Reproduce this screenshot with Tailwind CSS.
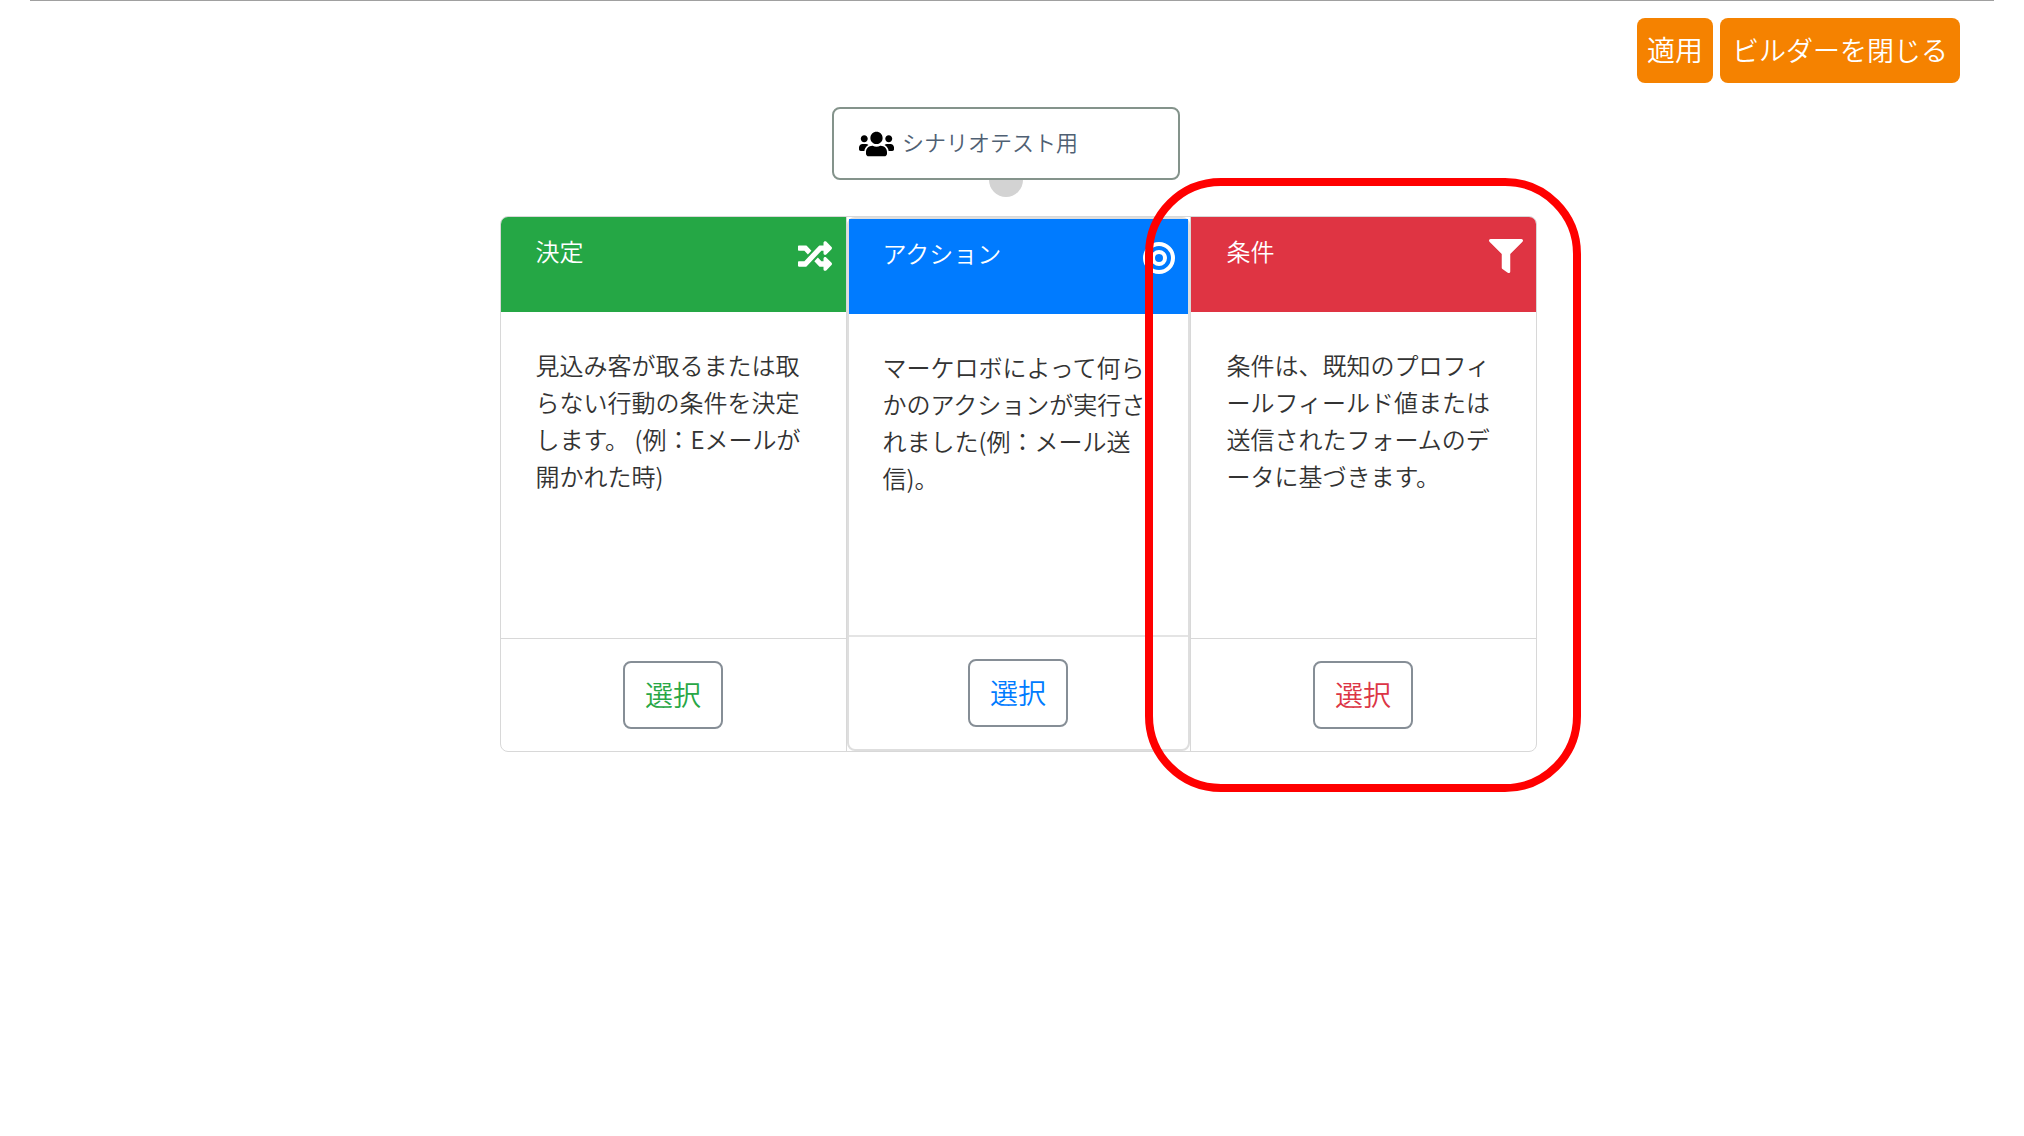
<!DOCTYPE html>
<html lang="ja">
  <head>
    <meta charset="UTF-8" />
    <meta name="viewport" content="width=device-width, initial-scale=1.0" />
    <title>シナリオビルダー</title>
    <script src="https://cdn.jsdelivr.net/npm/@tailwindcss/browser@4"></script>
  </head>
  <body class="min-h-screen bg-white font-['Noto_Sans_CJK_JP',sans-serif] text-2xl font-[350] leading-[37px] text-[#333]">
    <div class="mx-[30px] min-h-screen border-t border-[#a0a0a0]">
      <!-- Toolbar -->
      <header class="flex justify-end gap-[7px] pt-[17px] pr-[34px]">
        <button type="button" class="h-[65px] rounded-lg bg-[#f58200] px-2.5 pb-0.5 text-[28px] text-white cursor-pointer">適用</button>
        <button type="button" class="h-[65px] rounded-lg bg-[#f58200] px-3 pb-0.5 text-[27px] text-white cursor-pointer">ビルダーを閉じる</button>
      </header>

      <main class="flex flex-col items-center pt-6 pl-3">
        <!-- Source node -->
        <div class="flex flex-col items-center pr-6">
          <div class="flex h-[73px] w-[348px] items-center gap-2 rounded-lg border-2 border-[#84938b] pr-6 pl-[25px]">
            <svg class="h-7 w-[35px] shrink-0" viewBox="0 0 640 512" fill="#000">
              <path d="M96 224c35.3 0 64-28.7 64-64s-28.7-64-64-64-64 28.7-64 64 28.7 64 64 64zm448 0c35.3 0 64-28.7 64-64s-28.7-64-64-64-64 28.7-64 64 28.7 64 64 64zm32 32h-64c-17.6 0-33.5 7.1-45.1 18.6 40.3 22.1 68.9 62 75.1 109.4h66c17.7 0 32-14.3 32-32v-32c0-35.3-28.7-64-64-64zm-256 0c61.9 0 112-50.1 112-112S381.9 32 320 32 208 82.1 208 144s50.1 112 112 112zm76.8 32h-8.3c-20.8 10-43.9 16-68.5 16s-47.6-6-68.5-16h-8.3C179.6 288 128 339.6 128 403.2V432c0 26.5 21.5 48 48 48h288c26.5 0 48-21.5 48-48v-28.8c0-63.6-51.6-115.2-115.2-115.2zm-223.7-13.4C161.5 263.1 145.6 256 128 256H64c-35.3 0-64 28.7-64 64v32c0 17.7 14.3 32 32 32h65.9c6.3-47.4 34.9-87.3 75.2-109.4z" />
            </svg>
            <span class="pb-1 text-[22px] text-[#4f6073]">シナリオテスト用</span>
          </div>
          <div class="h-[17px] w-[34px] rounded-b-full bg-[#d3d3d3]"></div>
        </div>

        <!-- Event type cards -->
        <div class="relative mt-[19px]">
          <div class="flex overflow-hidden rounded-lg border border-[#d8d8d8] whitespace-nowrap">
            <section class="flex w-[346px] flex-col border-r border-[#d8d8d8]">
              <div class="flex h-[95px] items-start justify-between bg-[#25a745] pt-[15px] pr-3.5 pl-[35px] text-white">
                <h2>決定</h2>
                <svg class="mt-[7px] size-[34px]" viewBox="0 0 512 512" fill="currentColor">
                  <path d="M504.971 359.029c9.373 9.373 9.373 24.569 0 33.941l-80 79.984c-15.01 15.01-40.971 4.49-40.971-16.971V416h-58.785a12.004 12.004 0 0 1-8.773-3.812l-70.556-75.596 53.333-57.143L352 336h32v-39.981c0-21.438 25.943-31.998 40.971-16.971l80 79.981zM12 176h84l52.781 56.551 53.333-57.143-70.556-75.596A11.999 11.999 0 0 0 122.785 96H12c-6.627 0-12 5.373-12 12v56c0 6.627 5.373 12 12 12zm372 0v39.984c0 21.46 25.961 31.98 40.971 16.971l80-79.984c9.373-9.373 9.373-24.569 0-33.941l-80-79.981C409.943 24.021 384 34.582 384 56.019V96h-58.785a12.004 12.004 0 0 0-8.773 3.812L96 336H12c-6.627 0-12 5.373-12 12v56c0 6.627 5.373 12 12 12h110.785c3.326 0 6.503-1.381 8.773-3.812L352 176h32z" />
                </svg>
              </div>
              <p class="min-h-[326px] flex-1 px-[35px] py-[34px]">
                見込み客が取るまたは取<br />らない行動の条件を決定<br />します。 (例：Eメールが<br />開かれた時)
              </p>
              <div class="flex h-[113px] items-center justify-center border-t border-[#d8d8d8]">
                <button type="button" class="h-[68px] w-[100px] rounded-lg border-2 border-[#868e96] pb-0.5 text-[28px] text-[#28a745] cursor-pointer">選択</button>
              </div>
            </section>

            <section class="flex w-[343px] flex-col rounded-lg border-2 border-[#dedede]">
              <div class="flex h-[95px] items-start justify-between bg-[#007bff] pt-[15px] pr-[13px] pl-[34px] text-white">
                <h2>アクション</h2>
                <svg class="mt-[7px] size-[34px]" viewBox="0 0 34 34" fill="none" stroke="currentColor" stroke-width="4">
                  <circle cx="18" cy="17" r="14" />
                  <circle cx="18" cy="17" r="6" />
                </svg>
              </div>
              <p class="flex-1 px-[34px] py-[34px]">
                マーケロボによって何ら<br />かのアクションが実行さ<br />れました(例：メール送<br />信)。
              </p>
              <div class="flex h-[114px] items-center justify-center border-t-2 border-[#e4e4e4]">
                <button type="button" class="h-[68px] w-[100px] rounded-lg border-2 border-[#868e96] pb-0.5 text-[28px] text-[#007bff] cursor-pointer">選択</button>
              </div>
            </section>

            <section class="flex w-[346px] flex-col border-l border-[#d8d8d8]">
              <div class="flex h-[95px] items-start justify-between bg-[#df3443] pt-[15px] pr-[13px] pl-9 text-white">
                <h2>条件</h2>
                <svg class="mt-[7px] size-[34px]" viewBox="0 0 512 512" fill="currentColor">
                  <path d="M487.976 0H24.028C2.71 0-8.047 25.866 7.058 40.971L192 225.941V432c0 7.831 3.821 15.17 10.237 19.662l80 55.98C298.02 518.69 320 507.493 320 487.98V225.941l184.947-184.97C520.021 25.896 509.338 0 487.976 0z" />
                </svg>
              </div>
              <p class="min-h-[326px] flex-1 px-9 py-[34px]">
                条件は、既知のプロフィ<br />ールフィールド値または<br />送信されたフォームのデ<br />ータに基づきます。
              </p>
              <div class="flex h-[113px] items-center justify-center border-t border-[#d8d8d8]">
                <button type="button" class="h-[68px] w-[100px] rounded-lg border-2 border-[#868e96] pb-0.5 text-[28px] text-[#dc3545] cursor-pointer">選択</button>
              </div>
            </section>
          </div>

          <!-- Highlight frame around the condition card -->
          <div class="pointer-events-none absolute -top-[38px] -right-11 -bottom-10 left-[645px] rounded-[76px] border-8 border-[#ff0000]"></div>
        </div>
      </main>
    </div>
  </body>
</html>
